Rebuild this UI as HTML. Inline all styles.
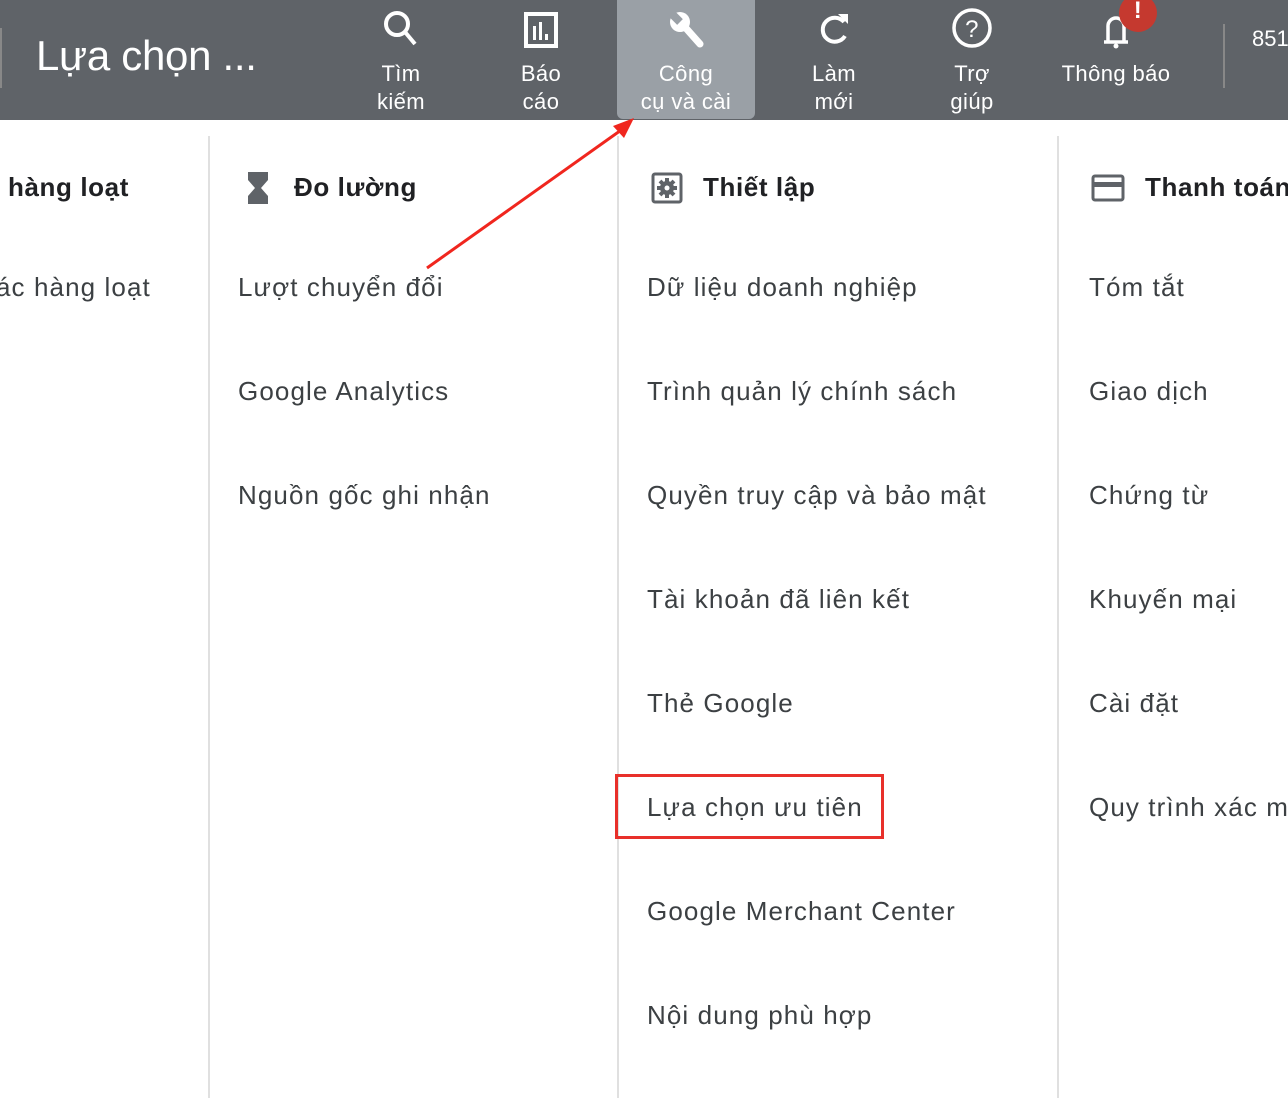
<!DOCTYPE html>
<html><head><meta charset="utf-8"><style>
*{margin:0;padding:0;box-sizing:border-box}
body{width:1288px;height:1098px;overflow:hidden;background:#fff;font-family:"Liberation Sans","DejaVu Sans",sans-serif;position:relative}
.hdr{position:absolute;left:0;top:0;width:1288px;height:120px;background:#5f6368}
.title{position:absolute;left:36px;top:32px;font-size:42px;color:#fff;letter-spacing:-0.3px}
.nav{position:absolute;top:0;height:120px;color:#fff;font-size:22px;text-align:center;line-height:28px;letter-spacing:0.4px}
.nav svg{display:block;margin:6px auto 0}
.nav .t{position:absolute;left:-10px;right:-10px;top:60px}
.act{background:#9aa0a6;border-radius:0 0 6px 6px}
.vl{position:absolute;top:136px;width:2px;height:962px;background:#e0e0e0}
.item{position:absolute;font-size:26px;color:#3c4043;white-space:nowrap;letter-spacing:1.1px}
.head{position:absolute;font-size:26px;color:#202124;white-space:nowrap;font-weight:bold;letter-spacing:0.6px}
</style></head><body>
<div class="hdr">
 <div style="position:absolute;left:0;top:28px;width:2px;height:60px;background:#888"></div>
 <div class="title">Lựa chọn ...</div>
 <div class="nav" style="left:360px;width:82px">
  <svg width="40" height="44" viewBox="0 0 40 44"><circle cx="16" cy="18" r="11" fill="none" stroke="#fff" stroke-width="4"/><line x1="24" y1="26" x2="34" y2="38" stroke="#fff" stroke-width="4"/></svg>
  <div class="t">Tìm<br>kiếm</div></div>
 <div class="nav" style="left:500px;width:82px">
  <svg width="40" height="44" viewBox="0 0 40 44"><rect x="5" y="8" width="30" height="32" fill="none" stroke="#fff" stroke-width="4"/><rect x="12" y="20" width="3" height="14" fill="#fff"/><rect x="18" y="16" width="3" height="18" fill="#fff"/><rect x="24" y="28" width="3" height="6" fill="#fff"/></svg>
  <div class="t">Báo<br>cáo</div></div>
 <div class="nav act" style="left:617px;width:138px;height:119px">
  <svg width="44" height="44" viewBox="0 0 44 44"><circle cx="16" cy="16" r="10" fill="#fff"/><rect x="12" y="4" width="8" height="12" fill="#9aa0a6" transform="rotate(-45 16 16)"/><line x1="20" y1="20" x2="36" y2="38" stroke="#fff" stroke-width="7" stroke-linecap="round"/></svg>
  <div class="t">Công<br>cụ và cài</div></div>
 <div class="nav" style="left:795px;width:78px">
  <svg width="40" height="44" viewBox="0 0 40 44"><path d="M30 16 A12 12 0 1 0 31 30" fill="none" stroke="#fff" stroke-width="4"/><path d="M24 8 L34 8 L34 18 Z" fill="#fff"/></svg>
  <div class="t">Làm<br>mới</div></div>
 <div class="nav" style="left:932px;width:80px">
  <svg width="44" height="44" viewBox="0 0 44 44"><circle cx="22" cy="22" r="18" fill="none" stroke="#fff" stroke-width="3.5"/><text x="22" y="31" font-size="24" text-anchor="middle" fill="#fff" font-family="Liberation Sans">?</text></svg>
  <div class="t">Trợ<br>giúp</div></div>
 <div class="nav" style="left:1050px;width:132px">
  <svg width="44" height="44" viewBox="0 0 44 44"><path d="M10 36 L34 36 M14 36 L14 20 A8 8 0 0 1 30 20 L30 36" fill="none" stroke="#fff" stroke-width="3.5"/><circle cx="22" cy="40" r="2.5" fill="#fff"/></svg>
  <div class="t" style="top:60px">Thông báo</div>
  <div style="position:absolute;left:69px;top:-6px;width:38px;height:38px;border-radius:50%;background:#c5392f;color:#fff;font-weight:bold;font-size:24px;line-height:34px">!</div></div>
 <div style="position:absolute;left:1223px;top:24px;width:2px;height:64px;background:#888"></div>
 <div style="position:absolute;left:1252px;top:26px;color:#fff;font-size:22px">851</div>
</div>
<div class="vl" style="left:208px"></div>
<div class="vl" style="left:617px"></div>
<div class="vl" style="left:1057px"></div>

<div class="head" style="left:8px;top:172px">hàng loạt</div>
<div class="item" style="left:-4px;top:272px">ác hàng loạt</div>

<svg style="position:absolute;left:246px;top:170px" width="24" height="36" viewBox="0 0 24 36"><path d="M2 2 H22 V10 L15 18 L22 26 V34 H2 V26 L9 18 L2 10 Z" fill="#5f6368"/></svg>
<div class="head" style="left:294px;top:172px">Đo lường</div>
<div class="item" style="left:238px;top:272px">Lượt chuyển đổi</div>
<div class="item" style="left:238px;top:376px">Google Analytics</div>
<div class="item" style="left:238px;top:480px">Nguồn gốc ghi nhận</div>

<svg style="position:absolute;left:651px;top:172px" width="32" height="32" viewBox="0 0 32 32"><rect x="2" y="2" width="28" height="28" rx="2" fill="none" stroke="#5f6368" stroke-width="3"/><circle cx="16" cy="16" r="7" fill="#5f6368"/><g stroke="#5f6368" stroke-width="4"><line x1="16" y1="6" x2="16" y2="26"/><line x1="6" y1="16" x2="26" y2="16"/><line x1="9" y1="9" x2="23" y2="23"/><line x1="23" y1="9" x2="9" y2="23"/></g><circle cx="16" cy="16" r="2.5" fill="#fff"/></svg>
<div class="head" style="left:703px;top:172px">Thiết lập</div>
<div class="item" style="left:647px;top:272px">Dữ liệu doanh nghiệp</div>
<div class="item" style="left:647px;top:376px">Trình quản lý chính sách</div>
<div class="item" style="left:647px;top:480px">Quyền truy cập và bảo mật</div>
<div class="item" style="left:647px;top:584px">Tài khoản đã liên kết</div>
<div class="item" style="left:647px;top:688px">Thẻ Google</div>
<div class="item" style="left:647px;top:792px">Lựa chọn ưu tiên</div>
<div class="item" style="left:647px;top:896px">Google Merchant Center</div>
<div class="item" style="left:647px;top:1000px">Nội dung phù hợp</div>
<div style="position:absolute;left:615px;top:774px;width:269px;height:65px;border:3px solid #e8302a"></div>

<svg style="position:absolute;left:1091px;top:174px" width="34" height="28" viewBox="0 0 34 28"><rect x="2" y="2" width="30" height="24" rx="2" fill="none" stroke="#5f6368" stroke-width="3"/><rect x="2" y="8" width="30" height="5" fill="#5f6368"/></svg>
<div class="head" style="left:1145px;top:172px">Thanh toán</div>
<div class="item" style="left:1089px;top:272px">Tóm tắt</div>
<div class="item" style="left:1089px;top:376px">Giao dịch</div>
<div class="item" style="left:1089px;top:480px">Chứng từ</div>
<div class="item" style="left:1089px;top:584px">Khuyến mại</div>
<div class="item" style="left:1089px;top:688px">Cài đặt</div>
<div class="item" style="left:1089px;top:792px">Quy trình xác minh</div>

<svg style="position:absolute;left:0;top:0" width="1288" height="1098"><line x1="427" y1="268" x2="624" y2="128" stroke="#f0261e" stroke-width="3"/><path d="M634 118 L613 126 L624 138 Z" fill="#f0261e"/></svg>
</body></html>
